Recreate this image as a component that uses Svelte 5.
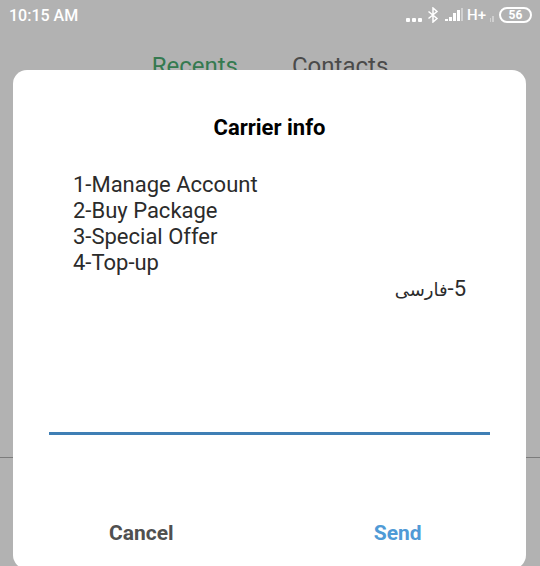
<script>
  const options = ["Manage Account", "Buy Package", "Special Offer", "Top-up"];
  const battery = 56;

  let reply = $state("");
  let open = $state(true);

  function close(e) {
    e?.preventDefault();
    reply = "";
    open = false;
  }
</script>

<div class="screen">
  <header class="status">
    <span class="clock">10:15 AM</span>
    <div class="indicators">
      <svg class="dots" width="17" height="16" viewBox="0 0 17 16" aria-hidden="true">
        <rect x="0" y="11" width="4" height="4" rx="1" />
        <rect x="6" y="11" width="4" height="4" rx="1" />
        <rect x="12" y="11" width="4" height="4" rx="1" />
      </svg>
      <svg class="bluetooth" width="12" height="16" viewBox="0 0 12 16" aria-hidden="true">
        <path d="M1.5 4.5 L10 11.5 L6 15 V1 L10 4.5 L1.5 11.5" />
      </svg>
      <svg class="signal" width="18" height="16" viewBox="0 0 18 16" aria-hidden="true">
        <rect x="0" y="12" width="3" height="2" />
        <rect x="4" y="10" width="3" height="4" />
        <rect x="8" y="6" width="3" height="8" />
        <rect x="12" y="3" width="3" height="11" />
        <rect class="faint" x="16" y="1" width="2" height="13" />
      </svg>
      <span class="network">H+</span>
      <svg class="sim" width="5" height="16" viewBox="0 0 5 16" aria-hidden="true">
        <rect x="0" y="11" width="1" height="4" />
        <rect x="2" y="9" width="2" height="6" />
      </svg>
      <span class="battery">{battery}</span>
    </div>
  </header>

  <nav class="tabs">
    <a class="active" href="#recents">Recents</a>
    <a href="#contacts">Contacts</a>
  </nav>

  <main class="calls"></main>

  {#if open}
    <form class="dialog" role="dialog" aria-labelledby="dialog-title" onsubmit={close}>
      <h1 id="dialog-title">Carrier info</h1>
      <div class="message" id="message">
        {#each options as option, i}
          <p>{i + 1}-{option}</p>
        {/each}
        <p dir="rtl">5-<span class="farsi" lang="fa">فارسی</span></p>
      </div>
      <input type="text" aria-label="Reply" aria-describedby="message" bind:value={reply} />
      <div class="actions">
        <button type="button" onclick={close}>Cancel</button>
        <button type="submit" class="primary">Send</button>
      </div>
    </form>
  {/if}
</div>

<style>
  :global(body) {
    margin: 0;
    background: #b2b2b2;
  }

  .screen {
    position: relative;
    display: flex;
    flex-direction: column;
    height: 100vh;
    overflow: hidden;
    background: #b2b2b2;
    font-family: Roboto, "Noto Sans", "DejaVu Sans", sans-serif;
    color: #2b2b2b;
  }

  .status {
    display: flex;
    align-items: center;
    justify-content: space-between;
    height: 30px;
    padding: 0 8px 0 9px;
    color: #fff;
    font-size: 16px;
    font-weight: 500;
  }

  .indicators {
    display: flex;
    align-items: center;
    gap: 4px;
  }

  .indicators svg {
    fill: #fff;
  }

  .indicators .bluetooth {
    margin-right: 2px;
    fill: none;
    stroke: #fff;
    stroke-width: 1.5;
  }

  .indicators .faint,
  .indicators .sim {
    opacity: 0.4;
  }

  .network {
    font-size: 15px;
  }

  .battery {
    box-sizing: border-box;
    width: 33px;
    border: 2px solid #fff;
    border-radius: 8px;
    font-size: 12px;
    font-weight: 700;
    line-height: 12px;
    text-align: center;
  }

  .tabs {
    display: flex;
    justify-content: center;
    gap: 54px;
    padding-top: 22px;
    font-size: 24px;
    line-height: 28px;
  }

  .tabs a {
    color: #4a4a4a;
    text-decoration: none;
  }

  .tabs .active {
    color: #357a50;
  }

  .calls {
    flex: 1;
    margin-bottom: 108px;
    border-bottom: 1px solid #7c7c7c;
  }

  .dialog {
    position: absolute;
    top: 70px;
    left: 13px;
    right: 14px;
    box-sizing: border-box;
    padding: 45px 0 10px;
    border-radius: 14px;
    background: #fff;
  }

  h1 {
    margin: 0 0 31px;
    color: #000;
    font-size: 22px;
    font-weight: 700;
    line-height: 26px;
    text-align: center;
  }

  .message {
    padding: 0 60px;
    font-size: 22px;
    line-height: 26px;
  }

  .message p {
    height: 26px;
    margin: 0;
  }

  .farsi {
    font-size: 18px;
    line-height: 18px;
  }

  input {
    display: block;
    box-sizing: border-box;
    width: calc(100% - 72px);
    height: 48px;
    margin: 85px 36px 72px;
    padding: 0 24px;
    border: 0;
    border-bottom: 3px solid #3f7fb5;
    outline: 0;
    background: none;
    color: inherit;
    font: inherit;
    font-size: 22px;
  }

  .actions {
    display: flex;
  }

  button {
    flex: 1;
    height: 52px;
    padding: 0;
    border: 0;
    background: none;
    color: #505050;
    font: inherit;
    font-size: 21px;
    font-weight: 700;
    cursor: pointer;
  }

  .primary {
    color: #4f9ad6;
  }
</style>
